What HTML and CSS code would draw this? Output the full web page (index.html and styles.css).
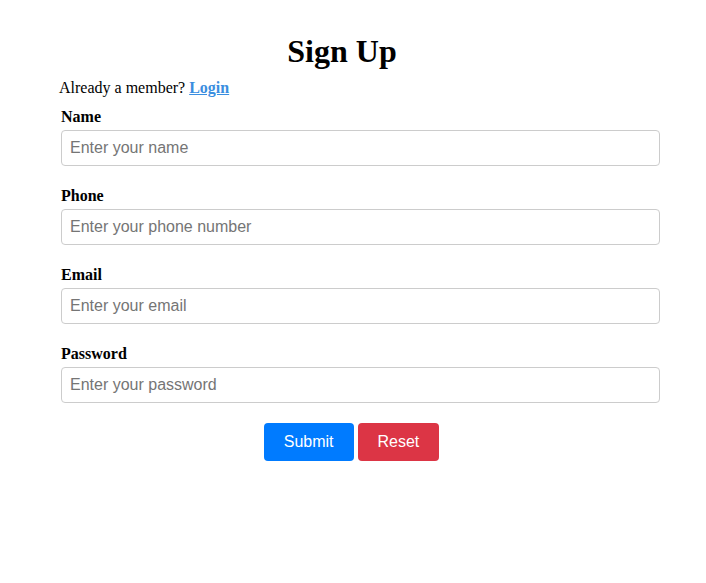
FILE: index.html
```html
<!DOCTYPE html>
<html>
<head>
<meta charset="utf-8">
<title>Sign Up</title>
<link rel="stylesheet" href="styles.css">
</head>
<body>
<div class="page">
  <h1 class="title">Sign Up</h1>
  <p class="member">Already a member? <a href="#" class="login">Login</a></p>
  <form class="form">
    <div class="field">
      <label class="label">Name</label>
      <input class="input" type="text" placeholder="Enter your name">
    </div>
    <div class="field">
      <label class="label">Phone</label>
      <input class="input" type="text" placeholder="Enter your phone number">
    </div>
    <div class="field">
      <label class="label">Email</label>
      <input class="input" type="text" placeholder="Enter your email">
    </div>
    <div class="field">
      <label class="label">Password</label>
      <input class="input" type="password" placeholder="Enter your password">
    </div>
    <div class="actions">
      <button type="button" class="btn btn-submit">Submit</button>
      <button type="button" class="btn btn-reset">Reset</button>
    </div>
  </form>
</div>
</body>
</html>
```

FILE: styles.css
```css
html, body {
  margin: 0;
  padding: 0;
  background: #ffffff;
}
body {
  font-family: "Liberation Serif", "Times New Roman", serif;
  color: #000;
}
.page {
  width: 601px;
  margin-left: 59px;
  padding-top: 33px;
}
.title {
  margin: 0;
  font-size: 32px;
  line-height: 37px;
  font-weight: bold;
  text-align: center;
  padding-right: 35px;
}
.member {
  margin: 9px 0 0 0;
  font-size: 16px;
  line-height: 18px;
}
.login {
  color: #3a8ee0;
  font-weight: bold;
  text-decoration: underline;
}
.form {
  margin-left: 2px;
  display: flex;
  flex-direction: column;
}
.field {
  display: flex;
  flex-direction: column;
  margin-top: 11px;
}
.field + .field {
  margin-top: 21px;
}
.label {
  font-size: 16px;
  line-height: 18px;
  font-weight: bold;
  margin-bottom: 4px;
}
.input {
  box-sizing: border-box;
  width: 599px;
  height: 36px;
  padding: 8px;
  border: 1px solid #cccccc;
  border-radius: 4px;
  font-family: "Liberation Sans", Arial, sans-serif;
  font-size: 16px;
  color: #333;
  outline: none;
}
.input::placeholder {
  color: #757575;
}
.actions {
  display: flex;
  justify-content: center;
  gap: 4px;
  margin-top: 20px;
  padding-right: 18px;
}
.btn {
  box-sizing: border-box;
  height: 38px;
  padding: 0 20px;
  border: none;
  border-radius: 4px;
  color: #fff;
  font-family: "Liberation Sans", Arial, sans-serif;
  font-size: 16px;
  cursor: pointer;
}
.btn-submit {
  background: #007bff;
}
.btn-reset {
  background: #dc3545;
}
```
